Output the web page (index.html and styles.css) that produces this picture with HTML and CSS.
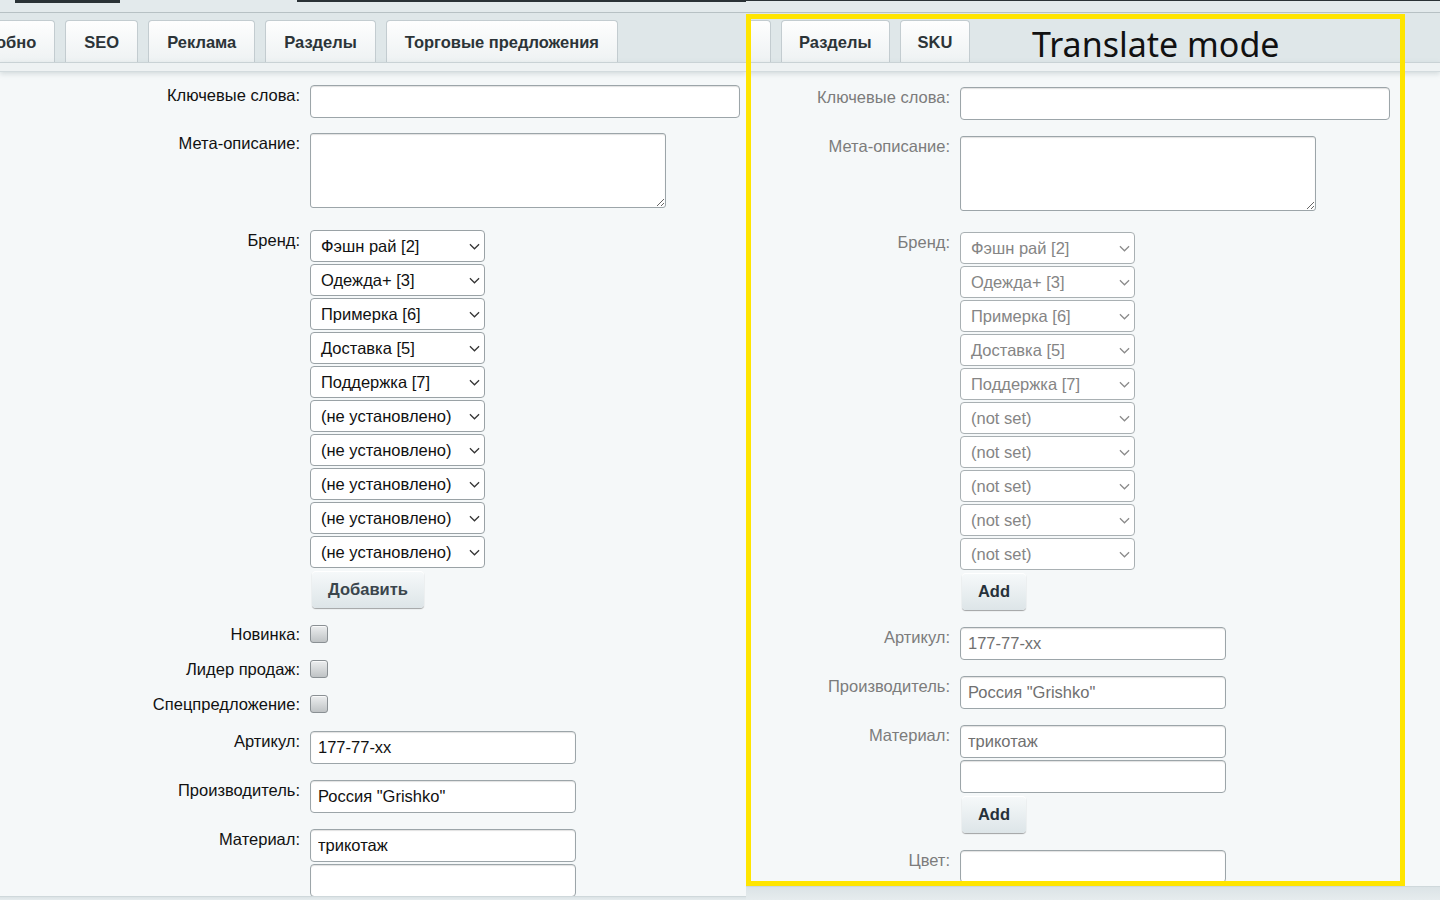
FILE: index.html
```html
<!DOCTYPE html>
<html lang="ru">
<head>
    <meta charset="UTF-8">
    <meta name="viewport" content="width=device-width, initial-scale=1.0">
    <title>Translate mode</title>
    <link rel="stylesheet" href="styles.css">
</head>
<body>
    <div class="screen">
        <!-- original page -->
        <div class="panel panel-left">
            <div class="topline">
                <span class="topline-bar bar-a"></span>
                <span class="topline-bar bar-b"></span>
            </div>
            <div class="tabs">
                <div class="tab tab-cut">обно</div>
                <div class="tab">SEO</div>
                <div class="tab">Реклама</div>
                <div class="tab">Разделы</div>
                <div class="tab">Торговые предложения</div>
            </div>
            <div class="tabs-edge"></div>
            <div class="content">
                <div class="row row-gap-15">
                    <label class="row-label">Ключевые слова:</label>
                    <div class="row-field"><input class="input input-wide" type="text"></div>
                </div>
                <div class="row row-gap-22">
                    <label class="row-label">Мета-описание:</label>
                    <div class="row-field"><textarea class="textarea"></textarea></div>
                </div>
                <div class="row row-gap-17">
                    <label class="row-label">Бренд:</label>
                    <div class="row-field stack">
                        <div class="select"><span>Фэшн рай [2]</span><svg class="chevron" viewBox="0 0 12 7"><path d="M1 1l5 5 5-5"/></svg></div>
                        <div class="select"><span>Одежда+ [3]</span><svg class="chevron" viewBox="0 0 12 7"><path d="M1 1l5 5 5-5"/></svg></div>
                        <div class="select"><span>Примерка [6]</span><svg class="chevron" viewBox="0 0 12 7"><path d="M1 1l5 5 5-5"/></svg></div>
                        <div class="select"><span>Доставка [5]</span><svg class="chevron" viewBox="0 0 12 7"><path d="M1 1l5 5 5-5"/></svg></div>
                        <div class="select"><span>Поддержка [7]</span><svg class="chevron" viewBox="0 0 12 7"><path d="M1 1l5 5 5-5"/></svg></div>
                        <div class="select"><span>(не установлено)</span><svg class="chevron" viewBox="0 0 12 7"><path d="M1 1l5 5 5-5"/></svg></div>
                        <div class="select"><span>(не установлено)</span><svg class="chevron" viewBox="0 0 12 7"><path d="M1 1l5 5 5-5"/></svg></div>
                        <div class="select"><span>(не установлено)</span><svg class="chevron" viewBox="0 0 12 7"><path d="M1 1l5 5 5-5"/></svg></div>
                        <div class="select"><span>(не установлено)</span><svg class="chevron" viewBox="0 0 12 7"><path d="M1 1l5 5 5-5"/></svg></div>
                        <div class="select"><span>(не установлено)</span><svg class="chevron" viewBox="0 0 12 7"><path d="M1 1l5 5 5-5"/></svg></div>
                        <button class="btn btn-add-ru">Добавить</button>
                    </div>
                </div>
                <div class="row row-check row-gap-17">
                    <label class="row-label">Новинка:</label>
                    <div class="row-field"><input class="checkbox" type="checkbox"></div>
                </div>
                <div class="row row-check row-gap-17">
                    <label class="row-label">Лидер продаж:</label>
                    <div class="row-field"><input class="checkbox" type="checkbox"></div>
                </div>
                <div class="row row-check row-gap-18">
                    <label class="row-label">Спецпредложение:</label>
                    <div class="row-field"><input class="checkbox" type="checkbox"></div>
                </div>
                <div class="row row-gap-16">
                    <label class="row-label">Артикул:</label>
                    <div class="row-field"><input class="input input-mid" type="text" value="177-77-xx"></div>
                </div>
                <div class="row row-gap-16">
                    <label class="row-label">Производитель:</label>
                    <div class="row-field"><input class="input input-mid" type="text" value="Россия &quot;Grishko&quot;"></div>
                </div>
                <div class="row">
                    <label class="row-label">Материал:</label>
                    <div class="row-field stack">
                        <input class="input input-mid" type="text" value="трикотаж">
                        <input class="input input-mid" type="text">
                    </div>
                </div>
            </div>
            <div class="page-foot foot-left"></div>
        </div>

        <!-- translated page -->
        <div class="panel panel-right">
            <div class="topline">
                <span class="topline-bar bar-full"></span>
            </div>
            <div class="tabs">
                <div class="tab tab-sliver"></div>
                <div class="tab">Разделы</div>
                <div class="tab">SKU</div>
            </div>
            <div class="tabs-edge"></div>
            <div class="content">
                <div class="row row-gap-16">
                    <label class="row-label">Ключевые слова:</label>
                    <div class="row-field"><input class="input input-wide" type="text"></div>
                </div>
                <div class="row row-gap-21">
                    <label class="row-label">Мета-описание:</label>
                    <div class="row-field"><textarea class="textarea"></textarea></div>
                </div>
                <div class="row row-gap-17">
                    <label class="row-label">Бренд:</label>
                    <div class="row-field stack">
                        <div class="select"><span>Фэшн рай [2]</span><svg class="chevron" viewBox="0 0 12 7"><path d="M1 1l5 5 5-5"/></svg></div>
                        <div class="select"><span>Одежда+ [3]</span><svg class="chevron" viewBox="0 0 12 7"><path d="M1 1l5 5 5-5"/></svg></div>
                        <div class="select"><span>Примерка [6]</span><svg class="chevron" viewBox="0 0 12 7"><path d="M1 1l5 5 5-5"/></svg></div>
                        <div class="select"><span>Доставка [5]</span><svg class="chevron" viewBox="0 0 12 7"><path d="M1 1l5 5 5-5"/></svg></div>
                        <div class="select"><span>Поддержка [7]</span><svg class="chevron" viewBox="0 0 12 7"><path d="M1 1l5 5 5-5"/></svg></div>
                        <div class="select"><span>(not set)</span><svg class="chevron" viewBox="0 0 12 7"><path d="M1 1l5 5 5-5"/></svg></div>
                        <div class="select"><span>(not set)</span><svg class="chevron" viewBox="0 0 12 7"><path d="M1 1l5 5 5-5"/></svg></div>
                        <div class="select"><span>(not set)</span><svg class="chevron" viewBox="0 0 12 7"><path d="M1 1l5 5 5-5"/></svg></div>
                        <div class="select"><span>(not set)</span><svg class="chevron" viewBox="0 0 12 7"><path d="M1 1l5 5 5-5"/></svg></div>
                        <div class="select"><span>(not set)</span><svg class="chevron" viewBox="0 0 12 7"><path d="M1 1l5 5 5-5"/></svg></div>
                        <button class="btn btn-add">Add</button>
                    </div>
                </div>
                <div class="row row-gap-16">
                    <label class="row-label">Артикул:</label>
                    <div class="row-field"><input class="input input-mid" type="text" value="177-77-xx"></div>
                </div>
                <div class="row row-gap-16">
                    <label class="row-label">Производитель:</label>
                    <div class="row-field"><input class="input input-mid" type="text" value="Россия &quot;Grishko&quot;"></div>
                </div>
                <div class="row row-gap-17">
                    <label class="row-label">Материал:</label>
                    <div class="row-field stack">
                        <input class="input input-mid" type="text" value="трикотаж">
                        <input class="input input-mid" type="text">
                        <button class="btn btn-add">Add</button>
                    </div>
                </div>
                <div class="row">
                    <label class="row-label">Цвет:</label>
                    <div class="row-field"><input class="input input-mid" type="text"></div>
                </div>
            </div>
            <div class="page-foot foot-right"></div>
        </div>

        <div class="translate-frame">
            <span class="translate-title">Translate mode</span>
        </div>
    </div>
</body>
</html>
```

FILE: styles.css
```css
body {
    margin: 0;
    padding: 0;
    font-family: "Liberation Sans", Arial, sans-serif;
    font-size: 16.5px;
    color: #111;
    background: #f5f8f9;
}

.screen {
    position: relative;
    display: flex;
    width: 1440px;
    height: 900px;
    overflow: hidden;
}

.panel {
    display: flex;
    flex-direction: column;
    overflow: hidden;
    background: #f5f8f9;
}

.panel-left {
    width: 746px;
    flex: 0 0 746px;
}

.panel-right {
    flex: 1;
}

/* strip above the tabs */
.topline {
    display: flex;
    height: 12px;
    background: #e3eaec;
    border-bottom: 1px solid #b7c1c4;
    flex: 0 0 auto;
}

.topline-bar {
    display: block;
    background: #2a3236;
}

.bar-a {
    margin-left: 15px;
    width: 105px;
    height: 3px;
}

.bar-b {
    margin-left: 177px;
    flex: 1;
    height: 2px;
}

.bar-full {
    flex: 1;
    height: 1px;
}

/* tabs */
.tabs {
    display: flex;
    align-items: flex-end;
    gap: 10px;
    height: 49px;
    padding-top: 7px;
    box-sizing: border-box;
    background: #dfe7e9;
    flex: 0 0 auto;
}

.tab {
    height: 42px;
    line-height: 42px;
    padding: 0 18px;
    box-sizing: border-box;
    border: 1px solid #c3ccd0;
    border-bottom: none;
    border-radius: 4px 4px 0 0;
    background: linear-gradient(#fefefe, #eef2f3);
    font-size: 16.5px;
    font-weight: bold;
    color: #2c3438;
    white-space: nowrap;
}

.tab-cut {
    margin-left: -25px;
    padding: 0 18px 0 20px;
}

.tab-sliver {
    width: 40px;
    margin-left: -15px;
}

.panel-right .tab {
    padding: 0 17px;
}

.tabs-edge {
    height: 8px;
    background: #eef2f3;
    border-top: 1px solid #c9d2d5;
    border-bottom: 1px solid #d3dbde;
    box-shadow: 0 2px 5px rgba(150, 165, 170, 0.35);
    flex: 0 0 auto;
}

/* form */
.content {
    flex: 1;
    overflow: hidden;
    padding-top: 13px;
}

.panel-right .content {
    padding-top: 15px;
}

.row {
    display: flex;
    align-items: flex-start;
}

.row-label {
    width: 310px;
    flex: 0 0 310px;
    box-sizing: border-box;
    padding-right: 10px;
    text-align: right;
    line-height: 20px;
    color: #111;
}

.panel-right .row-label {
    width: 214px;
    flex: 0 0 214px;
    color: #7c7c7c;
}

.row-check {
    align-items: center;
}

.row-check .row-label {
    line-height: 18px;
}

.row-gap-15 { margin-bottom: 15px; }
.row-gap-16 { margin-bottom: 16px; }
.row-gap-17 { margin-bottom: 17px; }
.row-gap-18 { margin-bottom: 18px; }
.row-gap-21 { margin-bottom: 21px; }
.row-gap-22 { margin-bottom: 22px; }

.stack {
    display: flex;
    flex-direction: column;
    align-items: flex-start;
    gap: 2px;
}

.input {
    display: block;
    height: 33px;
    box-sizing: border-box;
    padding: 0 7px;
    border: 1px solid #9ca5a9;
    border-radius: 4px;
    background: #fff;
    box-shadow: inset 0 1px 1px rgba(0, 0, 0, 0.12);
    font-family: "Liberation Sans", Arial, sans-serif;
    font-size: 16.5px;
    color: #111;
    outline: none;
}

.panel-right .input {
    color: #707070;
}

.input-wide {
    width: 430px;
}

.input-mid {
    width: 266px;
}

.textarea {
    display: block;
    width: 356px;
    height: 75px;
    box-sizing: border-box;
    margin: 0;
    border: 1px solid #9ca5a9;
    border-radius: 3px;
    background: #fff;
    box-shadow: inset 0 1px 1px rgba(0, 0, 0, 0.12);
    resize: both;
}

.select {
    position: relative;
    width: 175px;
    height: 32px;
    box-sizing: border-box;
    padding-left: 10px;
    line-height: 30px;
    border: 1px solid #9aa2a6;
    border-radius: 4px;
    background: #fff;
    color: #111;
    white-space: nowrap;
}

.panel-right .select {
    border-color: #a9b0b3;
    color: #858585;
}

.chevron {
    position: absolute;
    right: 4px;
    top: 12px;
    width: 11px;
    height: 7px;
    fill: none;
    stroke: #333;
    stroke-width: 1.3;
}

.panel-right .chevron {
    stroke: #8a8a8a;
}

.btn {
    margin: 1px 0 0 2px;
    height: 37px;
    padding: 0;
    border: none;
    border-radius: 4px;
    background: linear-gradient(#f6f9fa, #dde5e8);
    box-shadow: 0 1px 1px rgba(0, 0, 0, 0.35), inset 0 1px 0 #fff;
    font-family: "Liberation Sans", Arial, sans-serif;
    font-size: 16.5px;
    font-weight: bold;
    color: #3a454c;
}

.panel-right .btn {
    color: #26313a;
}

.btn-add-ru {
    width: 112px;
}

.btn-add {
    width: 64px;
}

.checkbox {
    appearance: none;
    display: block;
    width: 18px;
    height: 18px;
    margin: 0;
    border: 1px solid #8a9094;
    border-radius: 3px;
    background: linear-gradient(#eceeef, #bfc3c5);
    box-shadow: inset 0 1px 0 rgba(255, 255, 255, 0.7);
}

/* bottom edge of the page */
.page-foot {
    flex: 0 0 auto;
    background: linear-gradient(#dbe3e6, #e6ecee);
    border-top: 1px solid #cfd8db;
}

.foot-left {
    height: 3px;
}

.foot-right {
    height: 13px;
}

/* yellow translate overlay */
.translate-frame {
    position: absolute;
    left: 746px;
    top: 14px;
    width: 659px;
    height: 872px;
    box-sizing: border-box;
    border: 5px solid #ffe500;
    pointer-events: none;
}

.translate-title {
    position: absolute;
    left: 281px;
    top: 3px;
    font-family: "Noto Sans", "Open Sans", sans-serif;
    font-size: 34px;
    line-height: 44px;
    color: #111;
}
```
